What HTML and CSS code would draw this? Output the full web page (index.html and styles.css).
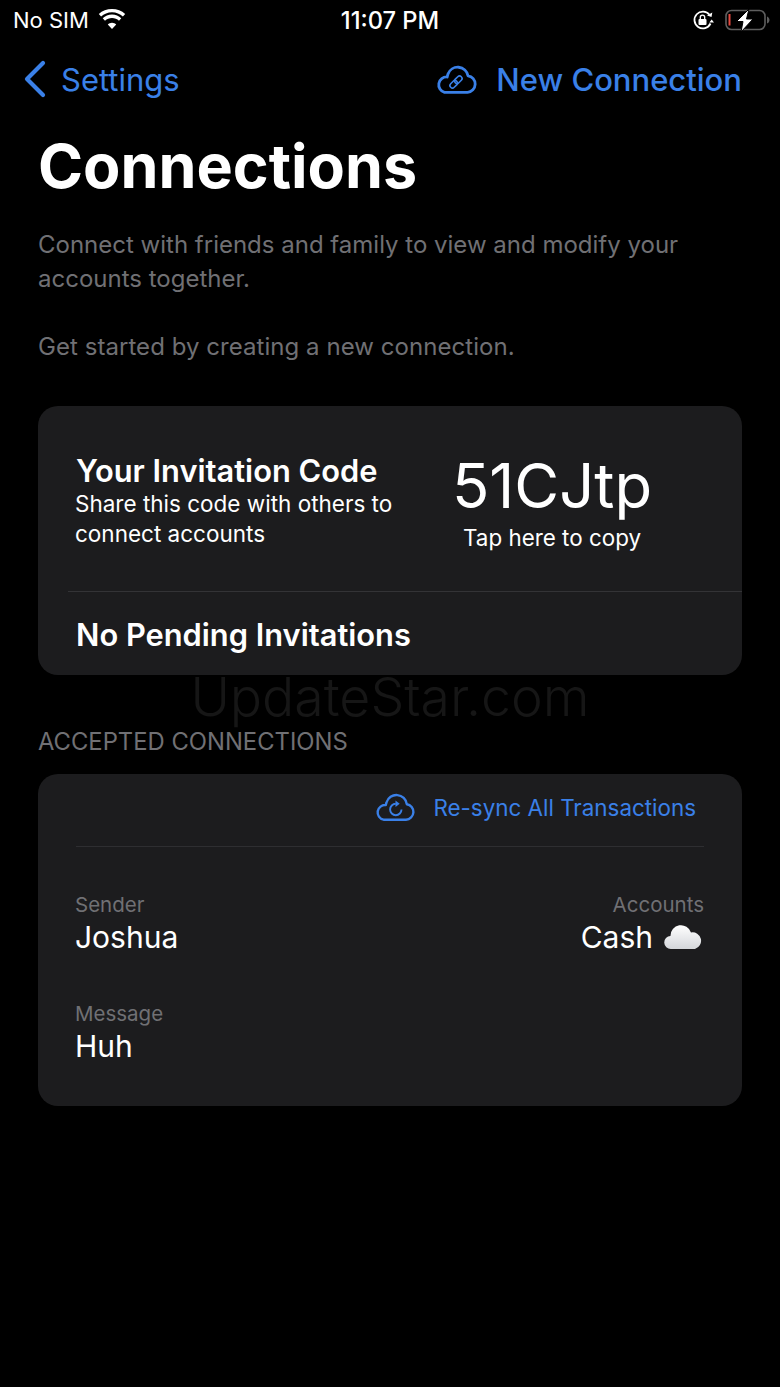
FILE: index.html
```html
<!DOCTYPE html>
<html lang="en">
<head>
<meta charset="utf-8">
<title>Connections</title>
<link rel="stylesheet" href="styles.css">
</head>
<body>
<div class="status">
  <div class="status-left">
    <span>No SIM</span>
    <svg class="wifi" width="28" height="20" viewBox="0 0 28 20"><path d="M14 3.200c4.200 0 8 1.600 10.900 4.300L27.200 5C23.700 1.700 19.100 0 14 0S4.300 1.700.8 5l2.300 2.500C6 4.800 9.800 3.200 14 3.200z" fill="#fff"/><path d="M14 9c2.700 0 5.100 1 7 2.800l2.300-2.500C20.800 7 17.600 5.600 14 5.600S7.200 7 4.700 9.300L7 11.800C8.900 10 11.300 9 14 9z" fill="#fff"/><path d="M14 20l-4.200-4.500c1.100-1 2.600-1.700 4.200-1.700s3.100.7 4.200 1.700z" fill="#fff"/></svg>
  </div>
  <div class="status-time">11:07 PM</div>
  <div class="status-right">
    <svg width="22" height="22" viewBox="0 0 22 22"><path d="M18.500 14.500A8.400 8.400 0 1 1 17.500 5.800" fill="none" stroke="#fff" stroke-width="1.800"/><path d="M15 6.500l4.500 1.500.8-4.500z M17.300 13.500l2.400-3 2.300 3z" fill="#fff"/><rect x="6.500" y="10" width="8" height="6" rx="1" fill="#fff"/><path d="M8.300 10V8.300a2.200 2.200 0 0 1 4.400 0V10" fill="none" stroke="#fff" stroke-width="1.300"/></svg>
    <svg class="battery" width="46" height="24" viewBox="0 0 46 24"><rect x="1" y="1.500" width="39" height="19" rx="5.500" fill="none" stroke="#5e5e5e" stroke-width="1.600"/><rect x="3.500" y="5" width="2" height="11.500" fill="#e5483e"/><path d="M42 7.500c1.500.5 2.500 2 2.500 3.500s-1 3-2.500 3.500z" fill="#5e5e5e"/><path d="M24 0 11.500 12.500H18L16 23 28 10h-6.500z" fill="#fff" stroke="#000" stroke-width="1"/></svg>
  </div>
</div>

<nav class="nav">
  <div class="nav-back">
    <svg width="24" height="38" viewBox="0 0 24 38"><path d="M20 3 4 19l16 16" fill="none" stroke="#3a80e8" stroke-width="4.200" stroke-linecap="round" stroke-linejoin="round"/></svg>
    <span>Settings</span>
  </div>
  <div class="nav-new">
    <svg width="42" height="30" viewBox="0 0 42 30"><path d="M9.500 28.300H32.500a8.300 8.300 0 0 0 .5-16.500A10.400 10.400 0 0 0 13 10q-.6 1.600-.8 3A7.800 7.800 0 0 0 9.500 28.300z" fill="none" stroke="#3a80e8" stroke-width="2.800" stroke-linejoin="round"/><g fill="none" stroke="#3a80e8" stroke-width="1.600" transform="rotate(-45 21 18)"><rect x="13.500" y="15.500" width="8.500" height="5" rx="2.500"/><rect x="20" y="15.500" width="8.500" height="5" rx="2.500"/></g></svg>
    <span>New Connection</span>
  </div>
</nav>

<main class="main">
  <h1 class="title">Connections</h1>
  <p class="desc">Connect with friends and family to view and modify your accounts together.</p>
  <p class="desc desc-second">Get started by creating a new connection.</p>

  <section class="card card-invite">
    <div class="invite-top">
      <div class="invite-info">
        <div class="invite-heading">Your Invitation Code</div>
        <div class="invite-sub">Share this code with others to connect accounts</div>
      </div>
      <div class="invite-code">
        <div class="code">51CJtp</div>
        <div class="code-hint">Tap here to copy</div>
      </div>
    </div>
    <div class="pending">No Pending Invitations</div>
  </section>

  <div class="watermark">UpdateStar.com</div>

  <h2 class="section-label">ACCEPTED CONNECTIONS</h2>

  <section class="card card-accepted">
    <div class="resync">
      <svg width="42" height="28" viewBox="0 0 42 28"><path d="M9.500 26.700H32a7.800 7.800 0 0 0 .8-15.500A10.400 10.400 0 0 0 12.500 9.500q-.5 1.300-.7 2.600A7.400 7.400 0 0 0 9.500 26.700z" fill="none" stroke="#3a80e8" stroke-width="2.400" stroke-linejoin="round"/><path d="M27.500 16.500a5.700 5.700 0 1 1-5.700-5.700" fill="none" stroke="#3a80e8" stroke-width="1.900"/><path d="M21.500 7.500l4.200 3.300-4.200 3.200z" fill="#3a80e8"/></svg>
      <span>Re-sync All Transactions</span>
    </div>
    <div class="details">
      <div class="detail-row">
        <div>
          <div class="detail-label">Sender</div>
          <div class="detail-value">Joshua</div>
        </div>
        <div class="detail-right">
          <div class="detail-label">Accounts</div>
          <div class="detail-value account">Cash
            <svg width="40" height="26" viewBox="0 0 40 26"><defs><linearGradient id="cl" x1="0" y1="0" x2="0" y2="1"><stop offset="0" stop-color="#fff"/><stop offset="1" stop-color="#d4d6da"/></linearGradient></defs><path d="M7 25a6.500 6.500 0 0 1-.5-13A10.500 10.500 0 0 1 27 8.500 8.500 8.500 0 0 1 31 25z" fill="url(#cl)"/></svg>
          </div>
        </div>
      </div>
      <div class="detail-msg">
        <div class="detail-label">Message</div>
        <div class="detail-value">Huh</div>
      </div>
    </div>
  </section>
</main>
</body>
</html>
```
FILE: styles.css
```css
* { box-sizing: border-box; }
html, body { margin: 0; padding: 0; }
body {
  width: 780px;
  height: 1387px;
  overflow: hidden;
  background: #000;
  color: #fff;
  font-family: Inter, "Liberation Sans", sans-serif;
}
.status {
  height: 40px;
  display: grid;
  grid-template-columns: 1fr auto 1fr;
  align-items: center;
  padding: 0 9px;
  font-size: 22px;
}
.status-left { display: flex; align-items: center; gap: 9px; padding-left: 4px; }
.wifi { margin-top: -3px; }
.status-time { font-weight: 500; font-size: 23.7px; }
.status-right { display: flex; justify-content: flex-end; align-items: center; gap: 11px; }
.battery { margin-top: 1px; }
.nav {
  height: 60px;
  margin-top: 9px;
  display: flex;
  justify-content: space-between;
  align-items: center;
  padding: 0 38px 0 23px;
  color: #3a80e8;
}
.nav-back { display: flex; align-items: center; gap: 14px; font-size: 31px; }
.nav-new { display: flex; align-items: center; gap: 19px; font-size: 31px; font-weight: 500; }
.main { position: relative; padding: 0 38px; }
.title {
  margin: 21px 0 0;
  font-size: 61px;
  line-height: 72px;
  font-weight: 700;
  height: 72px;
}
.desc {
  margin: 0;
  color: #707074;
  font-size: 24px;
  line-height: 34px;
}
.title + .desc { margin-top: 26px; }
.desc-second { margin-top: 34px; letter-spacing: 0.05px; }
.card { background: #1c1c1e; border-radius: 20px; }
.card-invite { margin-top: 42px; height: 269px; padding-left: 30px; }
.invite-top {
  height: 186px;
  display: flex;
  border-bottom: 1px solid #333336;
  padding-left: 8px;
}
.invite-info { width: 330px; padding-top: 47px; }
.invite-heading { font-size: 30.8px; line-height: 36px; font-weight: 600; }
.invite-sub { font-size: 22.5px; line-height: 30px; margin-left: -1px; }
.invite-code { width: 292px; text-align: center; padding-top: 44px; }
.code { font-size: 61.5px; line-height: 72px; }
.code-hint { font-size: 22.4px; line-height: 30px; margin-top: 1px; }
.pending { padding: 25px 8px 0; font-size: 30.8px; line-height: 36px; font-weight: 600; }
.watermark {
  position: absolute;
  top: 537px;
  left: 0;
  width: 100%;
  text-align: center;
  font-size: 53.6px;
  line-height: 60px;
  font-weight: 300;
  color: #161616;
}
.section-label {
  margin: 50px 0 0;
  color: #707074;
  font-size: 23.8px;
  line-height: 34px;
  font-weight: 400;
}
.card-accepted { margin-top: 15px; height: 332px; padding: 0 38px; }
.resync {
  height: 73px;
  display: flex;
  align-items: center;
  justify-content: flex-end;
  gap: 17px;
  padding: 0 8px 6px 0;
  border-bottom: 1px solid #2e2e31;
  color: #3a80e8;
  font-size: 22.4px;
}
.details { padding-top: 45px; margin-left: -1px; }
.detail-row { display: flex; justify-content: space-between; }
.detail-right { text-align: right; }
.detail-label { color: #707074; font-size: 20.5px; line-height: 26px; }
.detail-value { font-size: 30px; line-height: 38px; }
.account { display: flex; align-items: center; gap: 11px; justify-content: flex-end; }
.detail-msg { margin-top: 45px; }
```
